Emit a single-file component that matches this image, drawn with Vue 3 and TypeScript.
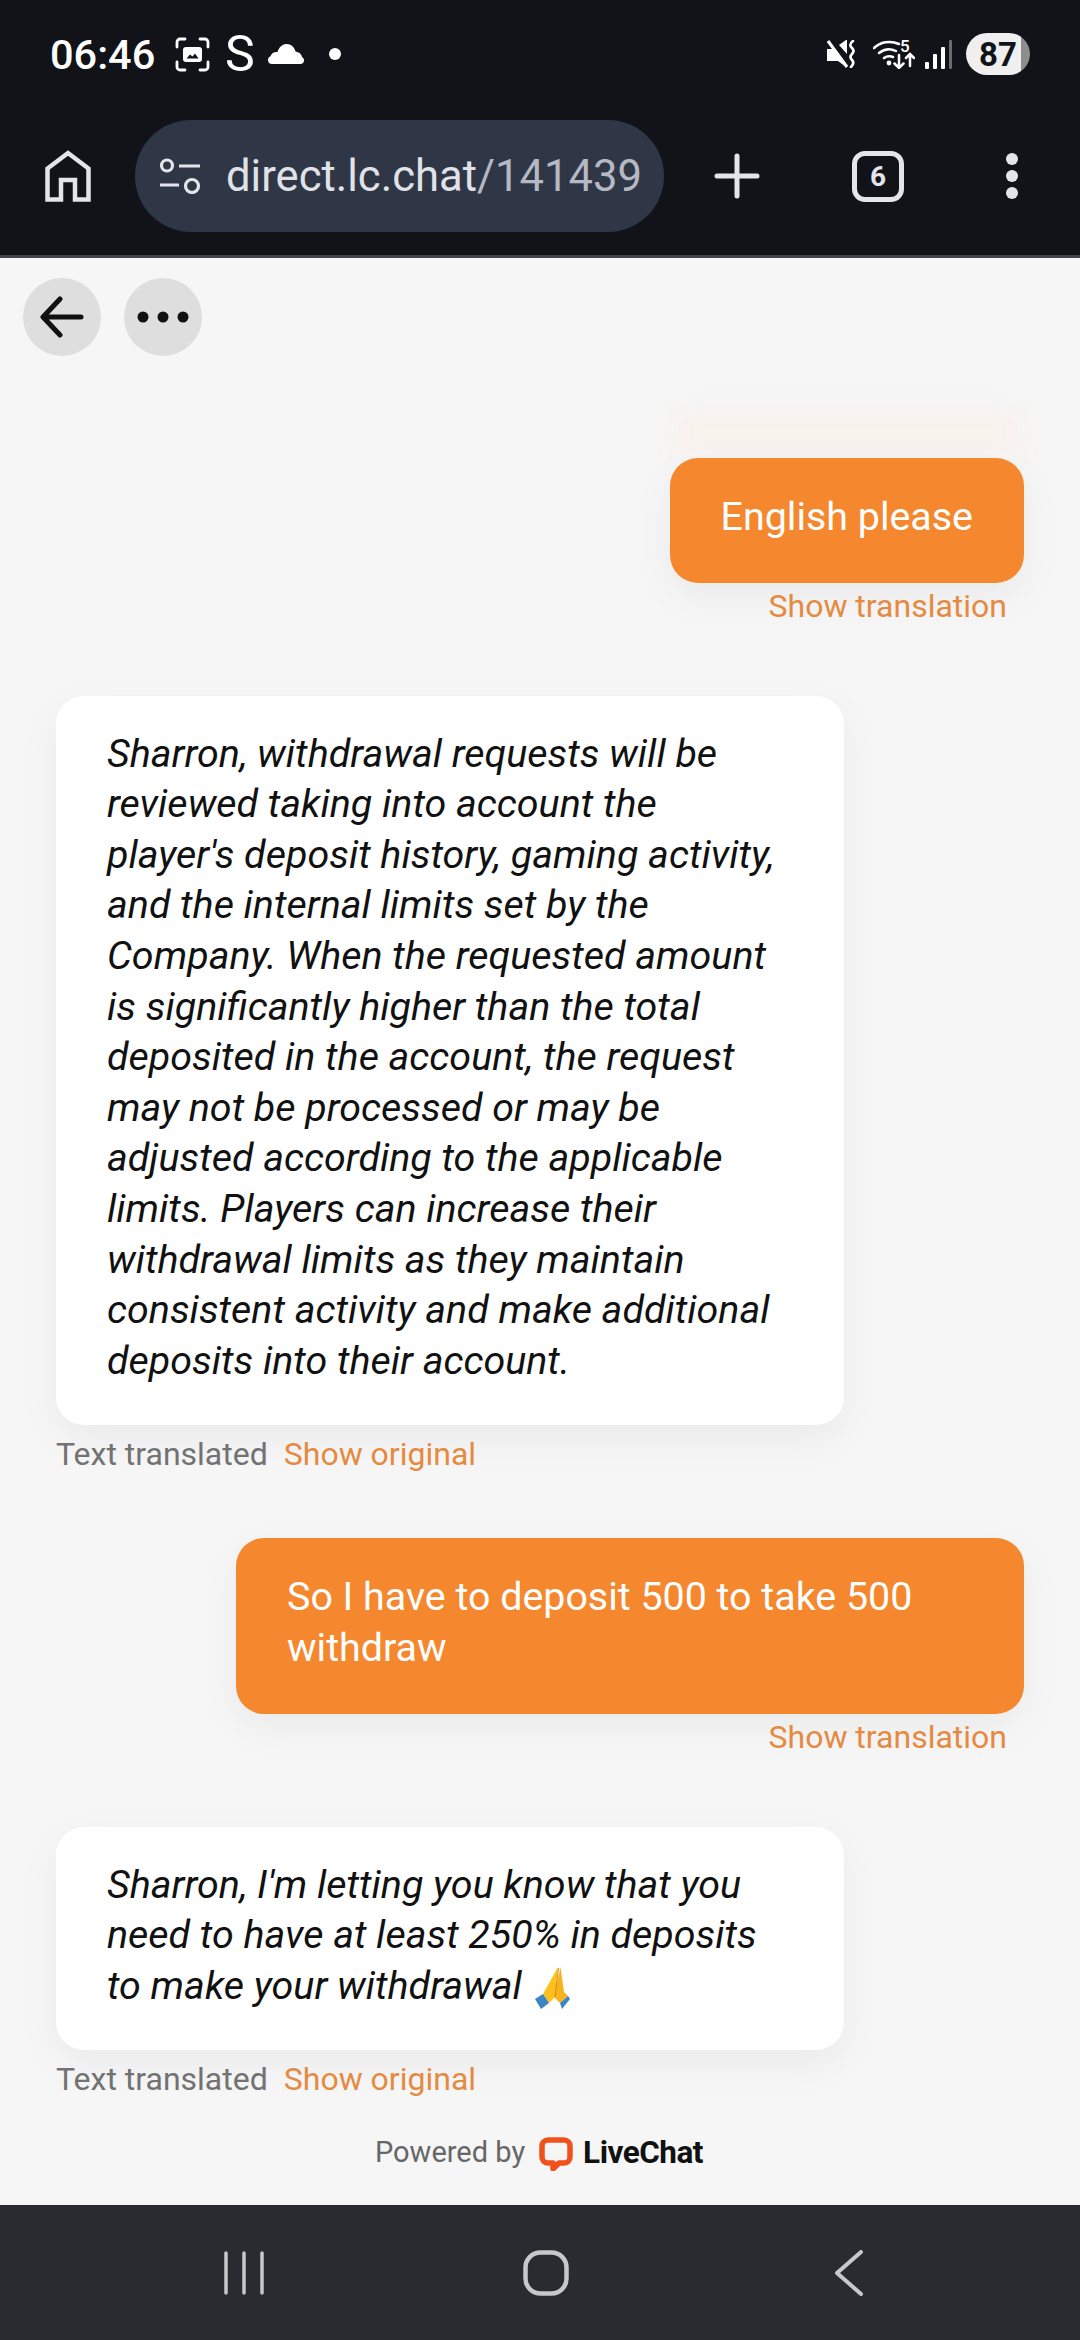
<script setup lang="ts">
interface Message {
  id: number
  mine: boolean
  text: string
  emoji?: boolean
}

const messages: Message[] = [
  { id: 1, mine: true, text: 'English please' },
  {
    id: 2,
    mine: false,
    text: "Sharron, withdrawal requests will be reviewed taking into account the player's deposit history, gaming activity, and the internal limits set by the Company. When the requested amount is significantly higher than the total deposited in the account, the request may not be processed or may be adjusted according to the applicable limits. Players can increase their withdrawal limits as they maintain consistent activity and make additional deposits into their account.",
  },
  { id: 3, mine: true, text: 'So I have to deposit 500 to take 500 withdraw' },
  {
    id: 4,
    mine: false,
    text: "Sharron, I'm letting you know that you need to have at least 250% in deposits to make your withdrawal",
    emoji: true,
  },
]
</script>

<template>
  <div class="phone">
    <header class="chrome">
      <div class="status">
        <div class="status-left">
          <span class="time">06:46</span>
          <svg class="ic-shot" viewBox="0 0 35 35" fill="none">
            <path d="M2 10V5a3 3 0 0 1 3-3h5M25 2h5a3 3 0 0 1 3 3v5M33 25v5a3 3 0 0 1-3 3h-5M10 33H5a3 3 0 0 1-3-3v-5" stroke="#fff" stroke-width="2.800" stroke-linecap="round" />
            <rect x="8" y="10" width="19" height="15" rx="3" fill="#fff" />
            <path d="M11.500 21.500l3.500-4 2.500 2 2.500-3 3.500 5z" fill="#111318" />
          </svg>
          <span class="s-glyph">S</span>
          <svg class="ic-cloud" viewBox="0 0 36 20" fill="#fff">
            <path d="M4 20a4 4 0 0 1-1.500-7.700C3.500 9 6.500 7.500 9.500 8 11 3 14.500 0 18.500 0c4.500 0 8 3 9 7.500 3.500.5 6 2.500 6.500 5.500a3.800 3.800 0 0 1 2 3.500c0 2-1.500 3.500-3.500 3.500z" />
          </svg>
          <span class="dot"></span>
        </div>
        <div class="status-right">
          <svg class="ic-mute" viewBox="0 0 29 28" fill="none">
            <path d="M0 9h6l2-2 12 14v6h-1l-8-6H0z" fill="#fff" />
            <path d="M12 5l7-5h1v14z" fill="#fff" />
            <path d="M3 0l19 27" stroke="#111318" stroke-width="4" />
            <path d="M1 1l19 26" stroke="#fff" stroke-width="3" />
            <path d="M26 1c-4 3-3 5-1 7s2 4 0 6-2 4 0 6 2 4-1 7" stroke="#fff" stroke-width="2.600" stroke-linecap="round" />
          </svg>
          <div class="wifi">
            <svg class="ic-wifi" viewBox="0 0 42 30" fill="none" stroke="#fff" stroke-width="2.500" stroke-linecap="round">
              <path d="M1 9C7 3 17 1 26 5" />
              <path d="M6 14c5-4 11-5 17-2" />
              <path d="M11 19c3-2 6-2 9-1" />
              <circle cx="16" cy="24" r="2.400" fill="#fff" stroke="none" />
              <path d="M26 16v13m-4.500-4.500l4.500 4.500 4.500-4.500M37 27V15m-4 4l4-4 4 4" />
            </svg>
            <span class="wifi-five">5</span>
          </div>
          <svg class="ic-signal" viewBox="0 0 27 29">
            <rect x="0" y="22" width="4" height="7" rx="1" fill="#fff" />
            <rect x="8" y="14" width="4" height="15" rx="1" fill="#fff" />
            <rect x="16" y="7" width="4" height="22" rx="1" fill="#fff" />
            <rect x="24" y="0" width="3" height="29" rx="1" fill="#6b6c70" />
          </svg>
          <div class="battery"><span>87</span></div>
        </div>
      </div>

      <div class="toolbar">
        <svg class="ic-home" viewBox="0 0 46 52" fill="none" stroke="#e3e5ea" stroke-width="4.500">
          <path d="M2.500 49.500V18.500L23 3l20.500 15.500v31H30V30H16v19.500z" />
        </svg>
        <div class="url-pill">
          <svg class="ic-tune" viewBox="0 0 42 36" fill="none" stroke="#e3e5ea" stroke-width="3.200">
            <circle cx="8" cy="7.500" r="5.500" />
            <circle cx="33" cy="28" r="6.500" />
            <path d="M20 8h21M1 27h19" />
          </svg>
          <span class="url">direct.lc.chat<span class="url-path">/141439</span></span>
        </div>
        <svg class="ic-plus" viewBox="0 0 46 46" stroke="#e3e5ea" stroke-width="5" stroke-linecap="round">
          <path d="M23 3v40M3 23h40" />
        </svg>
        <div class="tabs">6</div>
        <div class="kebab"><i></i><i></i><i></i></div>
      </div>
    </header>

    <main class="page">
      <div class="top-actions">
        <button class="round-btn">
          <svg viewBox="0 0 44 42" width="44" height="42" fill="none" stroke="#111" stroke-width="5" stroke-linecap="round" stroke-linejoin="round">
            <path d="M41 21H3M20 3L3 21l17 18" />
          </svg>
        </button>
        <button class="round-btn">
          <svg viewBox="0 0 52 12" width="52" height="12" fill="#111">
            <circle cx="6" cy="6" r="5.500" />
            <circle cx="26" cy="6" r="5.500" />
            <circle cx="46" cy="6" r="5.500" />
          </svg>
        </button>
      </div>

      <div class="thread">
        <div class="ghost"></div>
        <div v-for="m in messages" :key="m.id" class="msg" :class="m.mine ? 'mine' : 'theirs'">
          <div class="bubble">
            {{ m.text }}
            <svg v-if="m.emoji" class="emoji" viewBox="0 0 36 42">
              <path d="M24 0L9 27l6 9 6-6z" fill="#fcc21b" />
              <path d="M26.500 0l3.500 25 4 4-8 7-6-6z" fill="#f7b21c" />
              <path d="M24.500 1L21 30" stroke="#d18a10" stroke-width="1" fill="none" />
              <path d="M1 32l8-5 6 9-8 6z" fill="#3b86c2" />
              <path d="M26 36l8-7 2 3-8 10z" fill="#3b86c2" />
            </svg>
          </div>
          <div v-if="m.mine" class="note"><a class="link">Show translation</a></div>
          <div v-else class="note"><span class="muted">Text translated</span><a class="link">Show original</a></div>
        </div>
      </div>

      <div class="powered">
        <span class="powered-by">Powered by</span>
        <svg class="lc-logo" viewBox="0 0 34 34" fill="none">
          <path d="M9 3h16a6 6 0 0 1 6 6v11a6 6 0 0 1-6 6h-5l-6 6v-6H9a6 6 0 0 1-6-6V9a6 6 0 0 1 6-6z" stroke="#f0521e" stroke-width="5.500" stroke-linejoin="round" />
        </svg>
        <span class="lc-name">LiveChat</span>
      </div>
    </main>

    <nav class="navbar">
      <svg class="nav-recent" viewBox="0 0 40 44" stroke="#c8c8ca" stroke-width="3.500" stroke-linecap="round">
        <path d="M2 2v40M20 2v40M38 2v40" />
      </svg>
      <svg class="nav-home" viewBox="0 0 46 46" fill="none" stroke="#c8c8ca" stroke-width="4.500">
        <rect x="2.500" y="2.500" width="41" height="41" rx="15" />
      </svg>
      <svg class="nav-back" viewBox="0 0 28 46" fill="none" stroke="#c8c8ca" stroke-width="4" stroke-linecap="round" stroke-linejoin="round">
        <path d="M26 2L2 23l24 21" />
      </svg>
    </nav>
  </div>
</template>

<style>
html,
body {
  margin: 0;
  background: #f6f6f6;
}
</style>

<style scoped>
.phone {
  width: 1080px;
  height: 2340px;
  display: flex;
  flex-direction: column;
  overflow: hidden;
  font-family: Roboto, "Liberation Sans", sans-serif;
  background: #f6f6f6;
}

/* browser chrome */
.chrome {
  height: 255px;
  background: #111318;
  border-bottom: 3px solid #44444f;
  color: #fff;
  flex: none;
}

.status {
  height: 108px;
  padding: 0 50px;
  display: flex;
  align-items: center;
  justify-content: space-between;
}

.status-left,
.status-right {
  display: flex;
  align-items: center;
}

.time {
  font-size: 41.500px;
  font-weight: 500;
  width: 125px;
}

.ic-shot {
  width: 35px;
  height: 35px;
}

.s-glyph {
  font-size: 50px;
  font-weight: 400;
  margin-left: 15px;
  width: 43px;
  line-height: 50px;
}

.ic-cloud {
  width: 36px;
  height: 20px;
}

.dot {
  width: 12px;
  height: 12px;
  border-radius: 50%;
  background: #fff;
  margin-left: 25px;
}

.ic-mute {
  width: 29px;
  height: 28px;
}

.wifi {
  position: relative;
  width: 42px;
  height: 30px;
  margin-left: 17px;
}

.ic-wifi {
  display: block;
  width: 42px;
  height: 30px;
}

.wifi-five {
  position: absolute;
  left: 27px;
  top: 0;
  font-size: 17px;
  line-height: 14px;
  font-weight: 500;
  color: #fff;
}

.ic-signal {
  width: 27px;
  height: 29px;
  margin-left: 10px;
}

.battery {
  width: 64px;
  height: 42px;
  margin-left: 14px;
  border-radius: 21px;
  background: linear-gradient(90deg, #efefef 86%, #8d8d8d 86%);
  color: #111318;
  font-size: 33px;
  font-weight: 700;
  display: flex;
  align-items: center;
  justify-content: center;
}

.toolbar {
  display: flex;
  align-items: center;
  height: 112px;
  margin-top: 12px;
  padding-left: 45px;
}

.ic-home {
  width: 46px;
  height: 52px;
}

.url-pill {
  width: 529px;
  height: 112px;
  margin-left: 44px;
  border-radius: 56px;
  background: #2f3746;
  display: flex;
  align-items: center;
  padding-left: 24px;
  box-sizing: border-box;
}

.ic-tune {
  width: 42px;
  height: 36px;
}

.url {
  margin-left: 25px;
  font-size: 43.600px;
  color: #e0e2e8;
  white-space: nowrap;
}

.url-path {
  color: #b6b9c4;
}

.ic-plus {
  width: 46px;
  height: 46px;
  margin-left: 50px;
}

.tabs {
  width: 52px;
  height: 51px;
  margin-left: 92px;
  box-sizing: border-box;
  border: 5px solid #e3e5ea;
  border-radius: 13px;
  color: #e3e5ea;
  font-size: 28px;
  font-weight: 700;
  display: flex;
  align-items: center;
  justify-content: center;
}

.kebab {
  margin-left: 102px;
  display: flex;
  flex-direction: column;
  gap: 5px;
}

.kebab i {
  width: 12px;
  height: 12px;
  border-radius: 50%;
  background: #e3e5ea;
}

/* chat */
.page {
  flex: 1;
  padding: 20px 56px 0;
  display: flex;
  flex-direction: column;
  min-height: 0;
}

.top-actions {
  display: flex;
  gap: 23px;
  margin-left: -33px;
}

.round-btn {
  width: 78px;
  height: 78px;
  padding: 0;
  border: 0;
  border-radius: 50%;
  background: #dedede;
  display: flex;
  align-items: center;
  justify-content: center;
}

.thread {
  margin-top: 102px;
  display: flex;
  flex-direction: column;
  position: relative;
}

/* leftover glow of the message scrolled away under the fade */
.ghost {
  position: absolute;
  top: -46px;
  right: 2px;
  width: 348px;
  height: 44px;
  background: #f8f1ec;
  filter: blur(12px);
}

.msg {
  display: flex;
  flex-direction: column;
  position: relative;
}

.msg.mine {
  align-items: flex-end;
  margin-bottom: 67px;
}

.msg.theirs {
  align-items: flex-start;
  margin-bottom: 61px;
}

.msg:last-child {
  margin-bottom: 0;
}

.bubble {
  box-sizing: border-box;
  max-width: 788px;
  padding: 33px 51px 39px;
  border-radius: 28px;
  font-size: 39.400px;
  line-height: 50.600px;
  box-shadow: 0 14px 40px rgba(0, 0, 0, 0.05);
}

.mine .bubble {
  background: #f5882e;
  color: #fff;
  padding-top: 34px;
  padding-bottom: 40px;
}

.theirs .bubble {
  width: 788px;
  background: #fff;
  color: #111;
  font-style: italic;
}

.emoji {
  width: 36px;
  height: 42px;
  vertical-align: -10px;
  margin-left: 2px;
}

.note {
  height: 46px;
  font-size: 32px;
  line-height: 46px;
}

.mine .note {
  padding-right: 17px;
}

.theirs .note {
  margin-top: 6px;
}

.muted {
  color: #727272;
  margin-right: 16px;
}

.link {
  color: #e58a41;
}

.powered {
  margin-top: 30px;
  height: 40px;
  display: flex;
  align-items: center;
  justify-content: center;
  margin-left: -56px;
  margin-right: -56px;
  padding-right: 2px;
}

.powered-by {
  font-size: 29px;
  color: #666;
}

.lc-logo {
  width: 34px;
  height: 34px;
  margin-left: 14px;
  position: relative;
  top: 2px;
}

.lc-name {
  margin-left: 10px;
  font-size: 31.500px;
  font-weight: 700;
  color: #111;
  letter-spacing: -0.5px;
}

.navbar {
  flex: none;
  height: 135px;
  background: #2a2b30;
  display: flex;
  align-items: center;
  padding-left: 224px;
}

.nav-recent {
  width: 40px;
  height: 44px;
}

.nav-home {
  width: 46px;
  height: 46px;
  margin-left: 259px;
}

.nav-back {
  width: 28px;
  height: 46px;
  margin-left: 266px;
}
</style>
